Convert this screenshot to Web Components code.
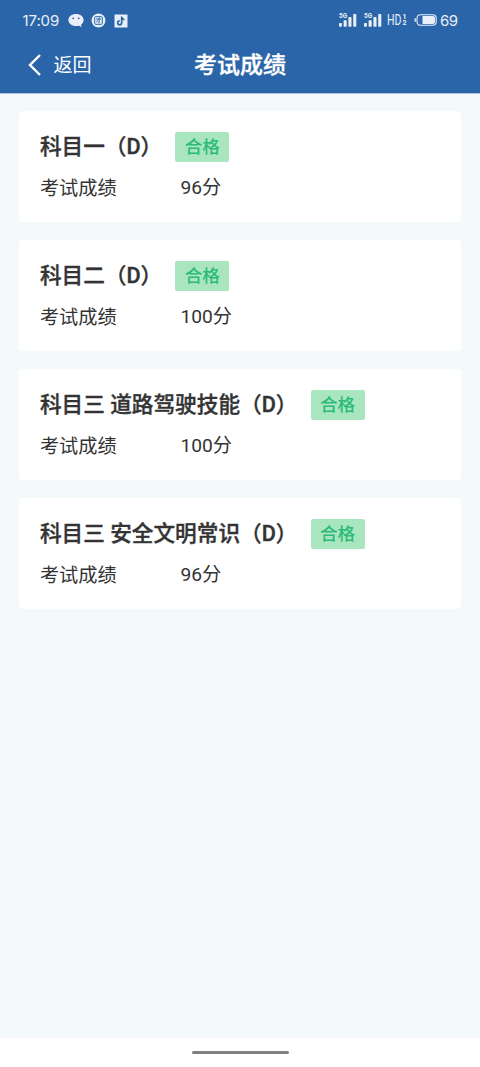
<!DOCTYPE html>
<html lang="zh-CN">
<head>
<meta charset="utf-8">
<title>考试成绩</title>
<style>
html,body{margin:0;height:100%}
body{font-family:Roboto,"Noto Sans CJK SC",sans-serif;color:#333;background:#f4f9fb;overflow:hidden}
</style>
</head>
<body>
<exam-page></exam-page>
<script>
function define(name, html) {
  customElements.define(name, class extends HTMLElement {
    constructor() {
      super();
      const t = document.createElement('template');
      t.innerHTML = html;
      this.attachShadow({ mode: 'open' }).append(t.content.cloneNode(true));
    }
  });
}

define('status-bar', `
<style>
:host{display:flex;box-sizing:border-box;height:40px;padding:0 23px 0 22.500px;align-items:center;color:#e9eff8;font:15px/20px Inter,sans-serif}
svg{display:block;flex:none}
.time{width:38px;letter-spacing:-.1px;white-space:nowrap;padding-top:1px}
.chat{margin-left:7.500px;margin-top:1px}.round{margin-left:7px;margin-top:1px}.note{margin-left:8px;margin-top:1px}
.signal{margin-left:auto}.signal+.signal{margin-left:6px}
.hd{margin-left:5px;width:20px;display:flex;font:500 15px/20px Roboto,sans-serif}
.hd>b{font-weight:400;width:14.500px;transform:scaleX(.7);transform-origin:0 0}
.sims{font:700 7px/6px Roboto,sans-serif;display:grid;align-content:center;margin-left:1px}
.battery{margin-left:7px}
.level{margin-left:3px;width:17px;letter-spacing:-.6px;white-space:nowrap;padding-top:1px}
</style>
<span class="time">17:09</span>
<svg class="chat" width="16" height="16" viewBox="0 0 16 16"><path fill="#e9eff8" d="M8 1c4.300 0 7.600 2.600 7.600 6 0 1.900-1 3.600-2.600 4.700l.8 2.300-2.800-1.200A10 10 0 0 1 8 13C3.700 13 .4 10.400.4 7S3.700 1 8 1z"/><circle cx="5.200" cy="5.300" r=".9" fill="#2b65a9"/><circle cx="10.700" cy="5.300" r=".9" fill="#2b65a9"/></svg>
<svg class="round" width="15" height="15" viewBox="0 0 15 15"><circle cx="7.500" cy="7.500" r="6.900" fill="#e9eff8"/><rect x="3.700" y="3.700" width="7.600" height="7.600" rx="1" fill="none" stroke="#2b65a9"/><path d="M5 6h5M8.200 4.500v5.200H7M8 6.300 5.200 9" stroke="#2b65a9" stroke-width=".9" fill="none"/></svg>
<svg class="note" width="14" height="14" viewBox="0 0 14 14"><path fill="#e9eff8" d="M.5.500h13v13H.5z"/><path d="M7.700 2.600v6.200a2 2 0 1 1-2-2M7.700 3.200c.3 1.500 1.200 2.300 2.800 2.400" stroke="#2b65a9" stroke-width="1.700" fill="none"/></svg>
<signal-icon class="signal"></signal-icon>
<signal-icon class="signal"></signal-icon>
<span class="hd"><b>HD</b><span class="sims"><span>1</span><span>2</span></span></span>
<svg class="battery" width="23" height="12" viewBox="0 0 23 12"><path d="M1.200 4.300v3.400" stroke="#e9eff8" stroke-width="1.300"/><rect x="3" y=".7" width="19.200" height="10.600" rx="3.500" fill="none" stroke="#e9eff8" stroke-width="1.100"/><path fill="#e9eff8" d="M8.500 2H19a2 2 0 0 1 2 2v4a2 2 0 0 1-2 2H8.500z"/></svg>
<span class="level">69</span>`);

define('signal-icon', `
<style>:host{display:block;width:19px;height:16px}svg{display:block}</style>
<svg width="19" height="16" viewBox="0 0 19 16" fill="#e9eff8"><text x="1" y="5.800" font-family="Roboto,sans-serif" font-weight="700" font-size="6.500">5G</text><rect x="1" y="11" width="2.900" height="3.700" rx=".8"/><rect x="5.600" y="8.300" width="3.100" height="6.400" rx=".8"/><rect x="10.400" y="5" width="3.100" height="9.700" rx=".8"/><rect x="15.200" y="2" width="3.100" height="12.700" rx=".8"/></svg>`);

define('nav-bar', `
<style>
:host{display:grid;grid-template-columns:1fr auto 1fr;align-items:center;height:53px;padding:0 28px;color:#fff}
.back{display:flex;align-items:center;font-size:19px;line-height:28px;gap:11.500px}
.title{font-size:23px;line-height:32px;font-weight:500;-webkit-text-stroke:.35px;padding-bottom:2px}
svg{display:block;margin-bottom:3px}
.text{padding-bottom:2px}
</style>
<div class="back"><svg width="14" height="22" viewBox="0 0 14 22"><path d="M12 1 2 11l10 10" fill="none" stroke="#fff" stroke-width="2.400"/></svg><span class="text">返回</span></div>
<div class="title"><slot></slot></div>`);

define('pass-tag', `
<style>
:host{display:block;flex:none;box-sizing:border-box;width:54px;height:30px;border-radius:2px;background:#a9e6bf;color:#2bba7a;font-size:17.6px;line-height:30px;text-align:center;font-weight:500}
</style><slot></slot>`);

define('score-card', `
<style>
:host{display:block;box-sizing:border-box;height:111px;padding:21px 20.500px 0;border-radius:4px;background:#fff}
.head{display:flex;height:30px;align-items:center;gap:13.100px}
.name{font-size:21.650px;line-height:30px;font-weight:500;-webkit-text-stroke:.35px;white-space:pre}
.row{display:grid;grid-template-columns:140.500px 1fr;font-size:19.200px;line-height:28px;margin-top:12.500px}
.row>:last-child{margin-top:-.5px}
</style>
<div class="head"><div class="name"><slot name="name"></slot></div><pass-tag>合格</pass-tag></div>
<div class="row"><span>考试成绩</span><span><slot name="score"></slot></span></div>`);

define('home-indicator', `
<style>
:host{display:flex;height:29px;background:#fff;justify-content:center;align-items:center}
div{width:97px;height:3px;border-radius:2px;background:#808080}
</style><div></div>`);

define('exam-page', `
<style>
:host{display:flex;flex-direction:column;height:1067px;background:#f4f9fb}
header{background:#2b65a9;border-bottom:1px solid #a9c2df;height:93px}
main{flex:1;display:flex;flex-direction:column;gap:18px;padding:17px 19px 0 19.400px}
</style>
<header><status-bar></status-bar><nav-bar>考试成绩</nav-bar></header>
<main>
<score-card><span slot="name">科目一（D）</span><span slot="score">96分</span></score-card>
<score-card><span slot="name">科目二（D）</span><span slot="score">100分</span></score-card>
<score-card><span slot="name">科目三 道路驾驶技能（D）</span><span slot="score">100分</span></score-card>
<score-card><span slot="name">科目三 安全文明常识（D）</span><span slot="score">96分</span></score-card>
</main>
<home-indicator></home-indicator>`);
</script>
</body>
</html>
